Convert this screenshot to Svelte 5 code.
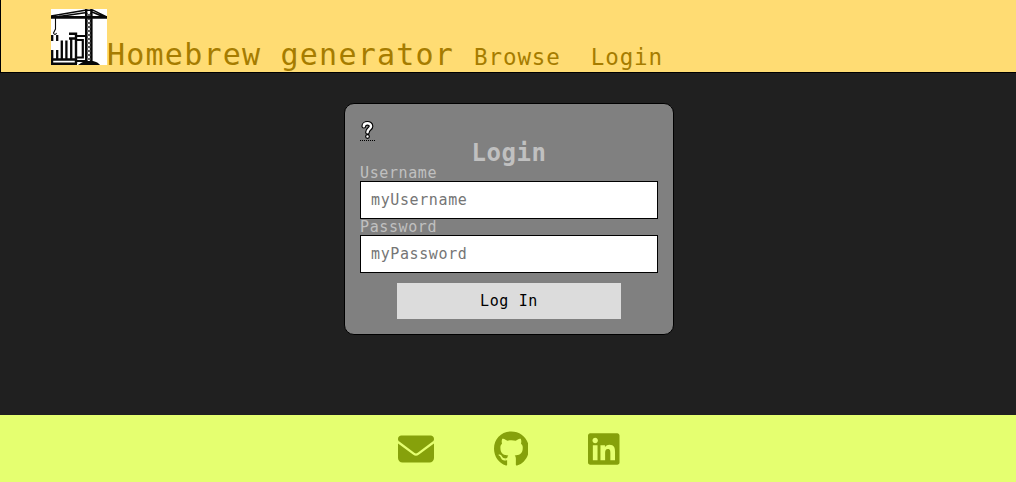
<script>
  let username = $state('');
  let password = $state('');
</script>

<div class="page">
  <header>
    <svg class="logo" viewBox="0 0 56 56" aria-label="Crane">
      <rect width="56" height="56" fill="#fff" />
      <g fill="none" stroke="#080808">
        <path d="M0 8.3H56" stroke-width="2.7" />
        <path d="M0 7L34 1.2H42L56 8M8 7.5L34 3.8M41 3L53 8" stroke-width="1.5" />
        <path d="M35.2 0V54M40.4 0V54" stroke-width="2.4" />
        <path d="M35.5 4L40 8L35.5 12L40 16L35.5 20L40 24L35.5 28L40 32L35.5 36L40 40L35.5 44L40 48L35.5 52M40 4L35.5 8L40 12L35.5 16L40 20L35.5 24L40 28L35.5 32L40 36L35.5 40L40 44L35.5 48L40 52" stroke-width=".8" />
        <path d="M4.5 9V20L2.5 24Q4 27 5.5 24" stroke-width="1.1" />
        <path d="M1.2 26V32M6.2 26V32M1.2 41V50M6.2 41V50M10.8 31.5V50M15.4 31.5V50M20.2 29V50" stroke-width="2.3" />
        <path d="M18 24.8H25V55M18 29.5H25M0 50.5H26M0 54.8H26M1 50V56" stroke-width="2.4" />
        <path d="M25 27H34M26 31H31.8V48.5H26M25 52H34" stroke-width="2.2" />
      </g>
      <path d="M27 56Q31 52.5 36 52H42Q47 53 49 56Z" fill="#080808" />
    </svg>
    <span class="brand">Homebrew generator</span>
    <nav>
      <a href="#browse">Browse</a>
      <a href="#login">Login</a>
    </nav>
  </header>

  <main>
    <form onsubmit={(e) => e.preventDefault()}>
      <div class="help">
        <abbr aria-label="Help">
          <svg viewBox="0 0 15 20">
            <path d="M3.8 7.2C3.8 3.6 11 3.2 11 7.2C11 10 7.5 9.8 7.5 13.2M7.5 17.4V17.5" />
            <path class="inner" d="M3.8 7.2C3.8 3.6 11 3.2 11 7.2C11 10 7.5 9.8 7.5 13.2M7.5 17.4V17.5" />
          </svg>
        </abbr>
      </div>
      <h1>Login</h1>
      <label for="username">Username</label>
      <input id="username" placeholder="myUsername" bind:value={username} />
      <label for="password">Password</label>
      <input id="password" type="password" placeholder="myPassword" bind:value={password} />
      <button>Log In</button>
    </form>
  </main>

  <footer>
    <svg width="36" height="36" viewBox="0 0 512 512"><path d="M48 64C21.5 64 0 85.5 0 112c0 15.1 7.1 29.3 19.2 38.4L236.8 313.6c11.4 8.5 27 8.5 38.4 0L492.8 150.4c12.1-9.1 19.2-23.3 19.2-38.4c0-26.5-21.5-48-48-48H48zM0 176V384c0 35.3 28.7 64 64 64H448c35.3 0 64-28.7 64-64V176L294.4 339.2c-22.8 17.1-54 17.1-76.8 0L0 176z" /></svg>
    <svg width="34.9" height="36" viewBox="0 0 496 512"><path d="M165.9 397.4c0 2-2.3 3.6-5.2 3.6-3.3.3-5.6-1.3-5.6-3.6 0-2 2.3-3.6 5.2-3.6 3-.3 5.6 1.3 5.6 3.6z M244.8 8C106.1 8 0 113.3 0 252c0 110.9 69.8 205.8 169.5 239.2 12.8 2.3 17.3-5.6 17.3-12.1 0-6.2-.3-40.4-.3-61.4 0 0-70 15-84.7-29.8 0 0-11.4-29.1-27.8-36.6 0 0-22.9-15.7 1.6-15.4 0 0 24.9 2 38.6 25.8 21.9 38.6 58.6 27.5 72.9 20.9 2.3-16 8.8-27.1 16-33.7-55.9-6.2-112.3-14.3-112.3-110.5 0-27.5 7.6-41.3 23.6-58.9-2.6-6.5-11.1-33.3 2.6-67.9 20.9-6.5 69 27 69 27 20-5.6 41.5-8.5 62.8-8.5s42.8 2.9 62.8 8.5c0 0 48.1-33.6 69-27 13.7 34.7 5.2 61.4 2.6 67.9 16 17.7 25.8 31.5 25.8 58.9 0 96.5-58.9 104.2-114.8 110.5 9.2 7.9 17 22.9 17 46.4 0 33.7-.3 75.4-.3 83.6 0 6.5 4.6 14.4 17.3 12.1C428.2 457.8 496 362.9 496 252 496 113.3 383.5 8 244.8 8z" /></svg>
    <svg width="31.5" height="36" viewBox="0 0 448 512"><path d="M416 32H31.9C14.3 32 0 46.5 0 64.3v383.4C0 465.5 14.3 480 31.9 480H416c17.6 0 32-14.5 32-32.3V64.3c0-17.8-14.4-32.3-32-32.3zM135.4 416H69V202.2h66.5V416zm-33.2-243c-21.3 0-38.5-17.3-38.5-38.5S80.9 96 102.2 96c21.2 0 38.5 17.3 38.5 38.5 0 21.3-17.2 38.5-38.5 38.5zm282.1 243h-66.4V312c0-24.8-.5-56.7-34.5-56.7-34.6 0-39.9 27-39.9 54.9V416h-66.4V202.2h63.7v29.2h.9c8.9-16.8 30.6-34.5 62.9-34.5 67.2 0 79.7 44.3 79.7 101.9V416z" /></svg>
  </footer>
</div>

<style>
  :global(body) { margin: 0; }
  .page {
    height: 482px;
    display: flex;
    flex-direction: column;
    background: #202020;
    font: 15px "DejaVu Sans Mono", monospace;
    letter-spacing: 0.61px;
    overflow: hidden;
  }
  header {
    box-sizing: border-box;
    height: 73px;
    flex: none;
    display: flex;
    align-items: baseline;
    padding: 9px 0 0 50px;
    background: #ffdc73;
    border-left: 1px solid #000;
    border-bottom: 1px solid #000;
    color: #a67c00;
  }
  .logo { width: 56px; height: 56px; display: block; }
  .brand { font-size: 30px; letter-spacing: 1.22px; line-height: 37px; white-space: pre; }
  nav { display: flex; gap: 30px; margin-left: 20px; font-size: 22.5px; letter-spacing: 0.9px; }
  nav a { color: inherit; text-decoration: none; }
  main { flex: 1; padding: 30px 0 0 2px; }
  form {
    box-sizing: border-box;
    width: 330px;
    height: 232px;
    margin: 0 auto;
    padding: 15px;
    display: flex;
    flex-direction: column;
    background: #808080;
    border: 1px solid #000;
    border-radius: 10px;
    color: #c0c0c0;
  }
  .help { height: 18px; flex: none; }
  abbr { display: block; width: 15px; height: 21px; border-bottom: 1px dotted #000; }
  abbr svg { display: block; width: 15px; height: 20px; overflow: visible; }
  abbr path { fill: none; stroke: #000; stroke-width: 4.8; stroke-linecap: round; }
  abbr .inner { stroke: #fff; stroke-width: 2.5; }
  h1 { margin: 0; height: 28px; flex: none; line-height: 32px; font-size: 24px; letter-spacing: 0.55px; text-align: center; }
  label { height: 16px; flex: none; line-height: 16px; }
  input {
    box-sizing: border-box;
    width: 298px;
    height: 38px;
    flex: none;
    padding: 0 10px;
    border: 1px solid #000;
    border-radius: 0;
    background: #fff;
    font: inherit;
    letter-spacing: inherit;
    outline: none;
  }
  input::placeholder { color: #757575; }
  button {
    width: 224px;
    height: 36px;
    flex: none;
    margin: 10px auto 0;
    padding: 0;
    border: 0;
    background: #dcdcdc;
    color: #000;
    font: inherit;
    letter-spacing: inherit;
  }
  footer {
    height: 67px;
    flex: none;
    display: flex;
    justify-content: center;
    align-items: center;
    gap: 60px;
    padding: 0 0 0 1.5px;
    box-sizing: border-box;
    background: #e5ff70;
    fill: #86a10b;
  }
</style>
